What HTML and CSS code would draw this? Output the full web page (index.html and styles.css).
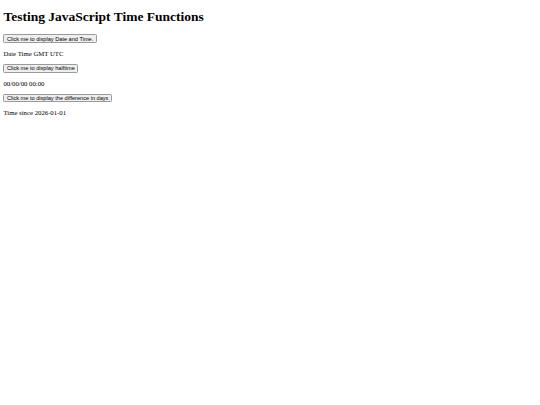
FILE: index.html
```html
<!DOCTYPE html>
<html>
<head>
<meta charset="utf-8">
<title>Testing JavaScript Time Functions</title>
<link rel="stylesheet" href="styles.css">
</head>
<body>
<h1 class="title">Testing JavaScript Time Functions</h1>
<button class="btn" type="button">Click me to display Date and Time.</button>
<p class="out">Date Time GMT UTC</p>
<button class="btn" type="button">Click me to display halftime</button>
<p class="out">00/00/00 00:00</p>
<button class="btn" type="button">Click me to display the difference in days</button>
<p class="out">Time since 2026-01-01</p>
</body>
</html>
```

FILE: styles.css
```css
html, body {
  background: #ffffff;
}
body {
  margin: 3.375px;
  font-family: "Liberation Serif", "Times New Roman", serif;
  font-size: 6.75px;
  color: #000000;
}
.title {
  font-size: 13.5px;
  font-weight: bold;
  margin: 6px 0 9.05px;
}
.btn {
  display: inline-block;
  font-family: "Liberation Sans", Arial, sans-serif;
  font-size: 5.625px;
  padding: 0.42px 2.53px;
  margin: 0;
  color: #000000;
  background: #efefef;
  border: 0.85px solid #9a9a9a;
  border-radius: 1.3px;
}
.out {
  margin: 6.9px 0;
}
```
